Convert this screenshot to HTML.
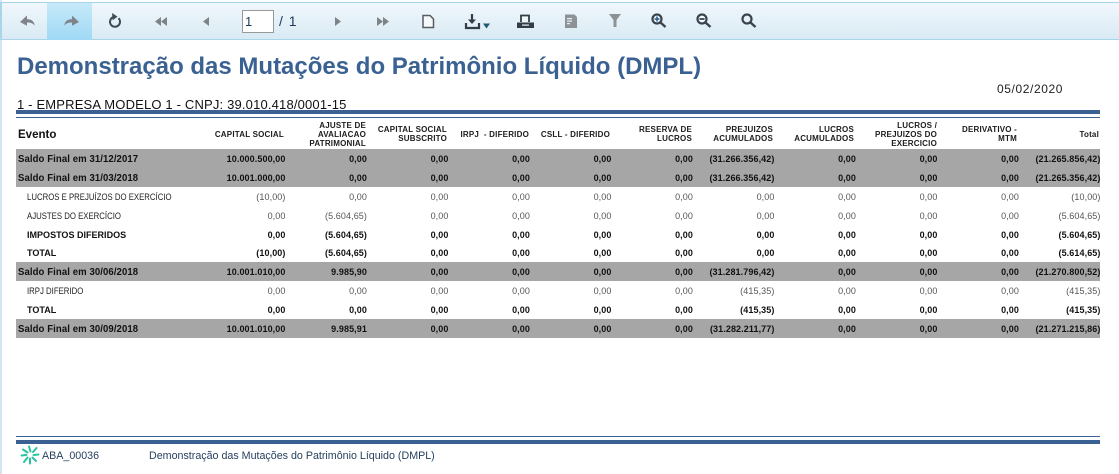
<!DOCTYPE html>
<html lang="pt"><head><meta charset="utf-8"><title>DMPL</title>
<style>
html,body{margin:0;padding:0;background:#fff}
body{width:1119px;height:474px;position:relative;overflow:hidden;font-family:"Liberation Sans",sans-serif}
.a{position:absolute}
#lb{left:0;top:0;width:2px;height:474px;background:#d3e6f1}
#tb{left:0;top:2px;width:1119px;height:38px;box-sizing:border-box;border:1px solid #a8d5e8;border-width:1px 0 1px 1px;border-left:2px solid #a8d5e8;background:linear-gradient(#f0f7fc,#d9eaf4)}
#act{left:47px;top:3px;width:45px;height:37px;background:linear-gradient(#c6e9f9,#9fd9f5)}
svg{position:absolute;overflow:visible}
#pg{left:242px;top:10px;width:32px;height:23px;box-sizing:border-box;background:#fff;border:1px solid #999;color:#1b3a5c;font-size:13px;line-height:21px;padding-left:2px}
#pt{left:279px;top:13px;font-size:14px;color:#1b3a5c;word-spacing:2px}
#ti{left:17px;top:51.500px;font-size:24px;font-weight:bold;color:#3a6191;white-space:nowrap;line-height:30px}
#su{left:17px;top:97px;font-size:13px;color:#111;white-space:nowrap;line-height:15px;letter-spacing:.17px}
#da{left:997px;top:82px;font-size:12px;color:#222;line-height:14px;letter-spacing:.6px}
.l1{left:16px;width:1084px;background:#3a6191}
.r{position:absolute;left:16px;width:1084px;height:19px;display:grid;grid-template-columns:188px repeat(11,81.5px);font:9px/21px "Liberation Sans",sans-serif;color:#555;white-space:nowrap}
.r span{text-align:right;display:block;letter-spacing:.1px}
.r span:first-child{text-align:left;padding-left:11px;font-size:9.5px;color:#222;letter-spacing:0;transform:scaleX(.82);transform-origin:11px 50%}
.b{font-weight:bold;color:#111}
.r.b span:first-child{color:#111;transform:scaleX(.95)}
.g{background:#a6a6a6;font-weight:bold;color:#111}
.r.g span:first-child{padding-left:2px;font-size:10.5px;font-weight:bold;color:#111;letter-spacing:.1px;transform:scaleX(.91);transform-origin:2px 50%}
.h{position:absolute;font:bold 8px/9.400px "Liberation Sans",sans-serif;color:#1c1c1c;text-align:right;white-space:nowrap;letter-spacing:.2px}
#ev{left:18px;top:128px;font:bold 11.5px/14px "Liberation Sans",sans-serif;color:#111}
.f{font-size:10.7px;color:#27415f;white-space:nowrap;line-height:13px}
</style></head><body>
<div class="a" id="lb"></div>
<div class="a" id="tb"></div>
<div class="a" id="act"></div>

<svg style="left:0;top:0" width="800" height="40" viewBox="0 0 800 40">
<g fill="#7f8488">
<path d="M20 22l7-6.5v3.6c4.500 0 7.500 2.500 7.700 6.600-1.700-2.400-4-3.200-7.700-3.200v3.200z"/>
<path d="M79 22l-7-6.500v3.600c-4.500 0-7.500 2.500-7.700 6.600 1.700-2.400 4-3.200 7.700-3.200v3.200z"/>
<path d="M155 21.500l6-4.500v9zM161 21.500l6-4.500v9z"/>
<path d="M203 21.500l6-4.500v9z"/>
<path d="M335 17l6 4.500-6 4.500z"/>
<path d="M377 17l6 4.500-6 4.500zM383 17l6 4.500-6 4.500z"/>
</g>
<path d="M118.500 18.200a5 5 0 1 1-5.500-1" fill="none" stroke="#3f4b55" stroke-width="2"/>
<path d="M112 13l5.500 3.600-4.800 3.600z" fill="#3f4b55"/>
<!-- new page -->
<path d="M423 15.500h7l3.500 3.500V27.500h-10.500z" fill="#f6f9fb" stroke="#5a5a60" stroke-width="1.500"/>
<!-- export -->
<path d="M472 14v8" stroke="#333d48" stroke-width="2.200" fill="none"/>
<path d="M468 19.500h8l-4 4.500z" fill="#333d48"/>
<path d="M466 23v5h13v-5" stroke="#333d48" stroke-width="2.200" fill="none"/>
<path d="M483 23.500h7l-3.500 5z" fill="#1f5870"/>
<!-- print -->
<path d="M521 22v-6.500h8V22" fill="#f2f7fb" stroke="#333d48" stroke-width="1.800"/>
<path d="M517 22.500h17v5.500h-17z" fill="#333d48"/>
<path d="M522 24.500h7v1.200h-7z" fill="#e8f1f7"/>
<!-- book -->
<path d="M565 14.500h9.500l2.500 2.500V28h-12z" fill="#8d9296"/>
<path d="M567 18h5v1.200h-5zM567 20.500h5v1.200h-5zM567 23h3v1.200h-3z" fill="#e8f1f7"/>
<!-- filter -->
<path d="M609 14h12l-4.500 6v7h-3v-7z" fill="#8d9296"/>
<!-- zoom in -->
<circle cx="657" cy="19" r="4.500" fill="#f4f8fb" stroke="#3a4450" stroke-width="2.200"/>
<path d="M654.500 19h5M657 16.500v5" stroke="#1f5f8c" stroke-width="1.500"/>
<path d="M660.500 22.500l5 4.500" stroke="#3a4450" stroke-width="2.400"/>
<!-- zoom out -->
<circle cx="702" cy="19" r="4.500" fill="#f4f8fb" stroke="#3a4450" stroke-width="2.200"/>
<path d="M699.500 19h5" stroke="#3a4450" stroke-width="1.800"/>
<path d="M705.500 22.500l5 4.500" stroke="#3a4450" stroke-width="2.400"/>
<!-- zoom -->
<circle cx="747" cy="19" r="4.500" fill="none" stroke="#3a4450" stroke-width="2.200"/>
<path d="M750.500 22.500l5 4.500" stroke="#3a4450" stroke-width="2.400"/>
</svg>

<div class="a" id="pg">1</div>
<div class="a" id="pt">/ 1</div>

<div class="a" id="ti">Demonstração das Mutações do Patrimônio Líquido (DMPL)</div>
<div class="a" id="da">05/02/2020</div>
<div class="a" id="su">1 - EMPRESA MODELO 1 - CNPJ: 39.010.418/0001-15</div>
<div class="a l1" style="top:110px;height:4px"></div>
<div class="a l1" style="top:117px;height:1px"></div>

<div class="a" id="ev">Evento</div>
<div class="h" style="right:835px;top:130px">CAPITAL SOCIAL</div>
<div class="h" style="right:753px;top:120.500px">AJUSTE DE<br>AVALIACAO<br>PATRIMONIAL</div>
<div class="h" style="right:672px;top:125px">CAPITAL SOCIAL<br>SUBSCRITO</div>
<div class="h" style="right:590px;top:130px">IRPJ&nbsp; - DIFERIDO</div>
<div class="h" style="right:509px;top:130px">CSLL - DIFERIDO</div>
<div class="h" style="right:427px;top:125px">RESERVA DE<br>LUCROS</div>
<div class="h" style="right:346px;top:125px">PREJUIZOS<br>ACUMULADOS</div>
<div class="h" style="right:265px;top:125px">LUCROS<br>ACUMULADOS</div>
<div class="h" style="right:182px;top:120.500px">LUCROS /<br>PREJUIZOS DO<br>EXERCICIO</div>
<div class="h" style="right:102px;top:125px">DERIVATIVO -<br>MTM</div>
<div class="h" style="right:20px;top:130px">Total</div>

<div class="r g" style="top:149px"><span>Saldo Final em 31/12/2017</span><span>10.000.500,00</span><span>0,00</span><span>0,00</span><span>0,00</span><span>0,00</span><span>0,00</span><span>(31.266.356,42)</span><span>0,00</span><span>0,00</span><span>0,00</span><span>(21.265.856,42)</span></div>
<div class="r g" style="top:168px"><span>Saldo Final em 31/03/2018</span><span>10.001.000,00</span><span>0,00</span><span>0,00</span><span>0,00</span><span>0,00</span><span>0,00</span><span>(31.266.356,42)</span><span>0,00</span><span>0,00</span><span>0,00</span><span>(21.265.356,42)</span></div>
<div class="r" style="top:187px"><span>LUCROS E PREJUÍZOS DO EXERCÍCIO</span><span>(10,00)</span><span>0,00</span><span>0,00</span><span>0,00</span><span>0,00</span><span>0,00</span><span>0,00</span><span>0,00</span><span>0,00</span><span>0,00</span><span>(10,00)</span></div>
<div class="r" style="top:206px"><span>AJUSTES DO EXERCÍCIO</span><span>0,00</span><span>(5.604,65)</span><span>0,00</span><span>0,00</span><span>0,00</span><span>0,00</span><span>0,00</span><span>0,00</span><span>0,00</span><span>0,00</span><span>(5.604,65)</span></div>
<div class="r b" style="top:225px"><span>IMPOSTOS DIFERIDOS</span><span>0,00</span><span>(5.604,65)</span><span>0,00</span><span>0,00</span><span>0,00</span><span>0,00</span><span>0,00</span><span>0,00</span><span>0,00</span><span>0,00</span><span>(5.604,65)</span></div>
<div class="r b" style="top:243px"><span>TOTAL</span><span>(10,00)</span><span>(5.604,65)</span><span>0,00</span><span>0,00</span><span>0,00</span><span>0,00</span><span>0,00</span><span>0,00</span><span>0,00</span><span>0,00</span><span>(5.614,65)</span></div>
<div class="r g" style="top:262px"><span>Saldo Final em 30/06/2018</span><span>10.001.010,00</span><span>9.985,90</span><span>0,00</span><span>0,00</span><span>0,00</span><span>0,00</span><span>(31.281.796,42)</span><span>0,00</span><span>0,00</span><span>0,00</span><span>(21.270.800,52)</span></div>
<div class="r" style="top:281px"><span>IRPJ DIFERIDO</span><span>0,00</span><span>0,00</span><span>0,00</span><span>0,00</span><span>0,00</span><span>0,00</span><span>(415,35)</span><span>0,00</span><span>0,00</span><span>0,00</span><span>(415,35)</span></div>
<div class="r b" style="top:300px"><span>TOTAL</span><span>0,00</span><span>0,00</span><span>0,00</span><span>0,00</span><span>0,00</span><span>0,00</span><span>(415,35)</span><span>0,00</span><span>0,00</span><span>0,00</span><span>(415,35)</span></div>
<div class="r g" style="top:319px"><span>Saldo Final em 30/09/2018</span><span>10.001.010,00</span><span>9.985,91</span><span>0,00</span><span>0,00</span><span>0,00</span><span>0,00</span><span>(31.282.211,77)</span><span>0,00</span><span>0,00</span><span>0,00</span><span>(21.271.215,86)</span></div>

<div class="a l1" style="top:436px;height:1px"></div>
<div class="a l1" style="top:440px;height:4px"></div>
<svg style="left:21px;top:446px" width="18" height="18" viewBox="0 0 18 18">
<g stroke="#2bc4a0" stroke-width="2" fill="none" stroke-linecap="round">
<path d="M8 0.500L9.500 5.500M15.500 2L12 6M17.500 8.500L12.500 9M15 15L11.500 11.500M9 17.500L9 12.500M3 16L6.500 11.500M0.500 9.500L5.500 9M2 3.500L6.500 6.500"/>
</g></svg>
<div class="a f" style="left:42px;top:450px">ABA_00036</div>
<div class="a f" style="left:149px;top:450px">Demonstração das Mutações do Patrimônio Líquido (DMPL)</div>
</body></html>
